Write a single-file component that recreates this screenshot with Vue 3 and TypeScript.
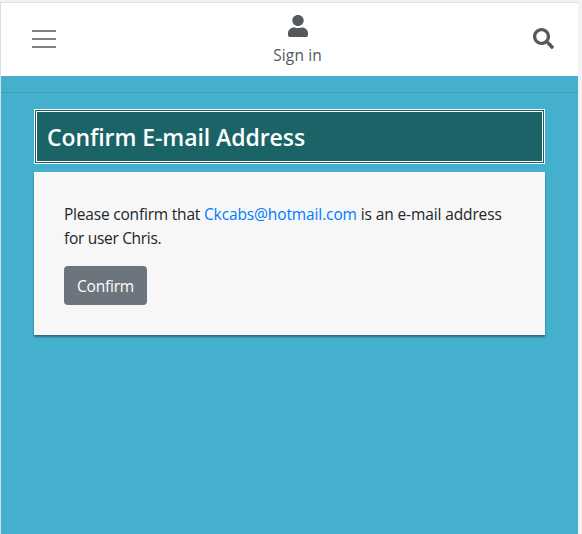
<script setup lang="ts">
import { ref } from 'vue'

const email = ref<string>('Ckcabs@hotmail.com')
const userName = ref<string>('Chris')
const confirmed = ref<boolean>(false)

function confirmAddress(): void {
  confirmed.value = true
}
</script>

<template>
  <div class="frame">
    <div class="page">
      <header class="navbar">
        <button class="icon-button" type="button" aria-label="Menu">
          <svg width="30" height="30" viewBox="0 0 30 30">
            <path d="M3 7h24M3 15h24M3 23h24" fill="none" stroke="#808080" stroke-width="2" />
          </svg>
        </button>
        <a class="sign-in">
          <svg class="user-icon" width="20" height="22" viewBox="0 0 448 512" preserveAspectRatio="none">
            <path fill="#55595c" d="M224 256c70.700 0 128-57.300 128-128S294.700 0 224 0 96 57.300 96 128s57.300 128 128 128zm89.600 32h-16.700c-22.200 10.200-46.900 16-72.900 16s-50.600-5.800-72.900-16h-16.700C60.200 288 0 348.200 0 422.400V464c0 26.500 21.500 48 48 48h352c26.500 0 48-21.500 48-48v-41.600c0-74.200-60.200-134.400-134.400-134.400z" />
          </svg>
          <span>Sign in</span>
        </a>
        <button class="icon-button search" type="button" aria-label="Search">
          <svg width="21" height="21" viewBox="0 0 512 512">
            <path fill="#55595c" d="M505 442.700L405.300 343c-4.500-4.500-10.600-7-17-7H372c27.600-35.300 44-79.700 44-128C416 93.100 322.900 0 208 0S0 93.100 0 208s93.100 208 208 208c48.300 0 92.700-16.400 128-44v16.300c0 6.400 2.500 12.500 7 17l99.700 99.700c9.400 9.400 24.600 9.400 33.900 0l28.300-28.300c9.400-9.400 9.400-24.600.1-34zM208 336c-70.700 0-128-57.200-128-128 0-70.700 57.200-128 128-128 70.700 0 128 57.200 128 128 0 70.700-57.200 128-128 128z" />
          </svg>
        </button>
      </header>
      <main class="content">
        <h1 class="title">Confirm E-mail Address</h1>
        <section class="card">
          <p class="message">
            <span class="lead">Please confirm that </span><a class="email">{{ email }}</a><span class="tail"> is an e-mail address</span><br><span class="user">for user {{ userName }}.</span>
          </p>
          <button class="confirm" type="button" :disabled="confirmed" @click="confirmAddress">Confirm</button>
        </section>
      </main>
    </div>
  </div>
</template>

<style>
body {
  margin: 0;
  background: #f1f2f3;
}
</style>

<style scoped>
.frame {
  box-sizing: border-box;
  height: 534px;
  padding: 2px 4px 0 0;
  background: #f1f2f3;
  font-family: "Open Sans", "Noto Sans", sans-serif;
  overflow: hidden;
}

.page {
  box-sizing: border-box;
  height: 532px;
  border-top: 1px solid #dfe0e1;
  border-left: 1px solid #dcdddd;
  background: #44b0cd;
}

.navbar {
  box-sizing: border-box;
  display: flex;
  justify-content: space-between;
  height: 73px;
  padding: 0 24px 0 28px;
  background: #fff;
}

.icon-button {
  display: flex;
  align-items: flex-start;
  width: 30px;
  padding: 21px 0 0;
  border: 0;
  background: none;
}

.search {
  justify-content: flex-end;
  padding-top: 25px;
}

.sign-in {
  display: flex;
  flex-direction: column;
  align-items: center;
  padding: 12px 0 0 12px;
  color: #55595c;
  font-size: 15.5px;
  letter-spacing: 0.12px;
  line-height: 24px;
}

.user-icon {
  margin-bottom: 6px;
}

.content {
  margin-top: 16px;
  padding: 16px 33px 0;
  border-top: 1px solid #3c9cba;
}

.title {
  box-sizing: border-box;
  height: 55px;
  margin: 0 0 8px;
  padding: 0 10px;
  border: 3px double #fff;
  background: #1a6467;
  color: #fff;
  font-size: 23px;
  font-weight: 600;
  letter-spacing: -0.07px;
  line-height: 50px;
  white-space: nowrap;
}

.card {
  box-sizing: border-box;
  height: 163px;
  padding: 30px;
  background: #f7f7f7;
  box-shadow: 0 2px 2px rgba(0, 0, 0, 0.4);
}

.message {
  margin: 0 0 16px;
  color: #212529;
  font-size: 15.5px;
  line-height: 24px;
  white-space: nowrap;
}

.lead,
.tail {
  white-space: pre;
}

.lead {
  letter-spacing: -0.2px;
}

.tail {
  letter-spacing: -0.12px;
}

.user {
  letter-spacing: -0.3px;
}

.email {
  color: #007bff;
  letter-spacing: -0.12px;
}

.confirm {
  display: block;
  width: 83px;
  height: 39px;
  padding: 0;
  border: 0;
  border-radius: 4px;
  background: #6c757d;
  color: #fff;
  font: inherit;
  font-size: 15.5px;
  letter-spacing: -0.2px;
}
</style>
